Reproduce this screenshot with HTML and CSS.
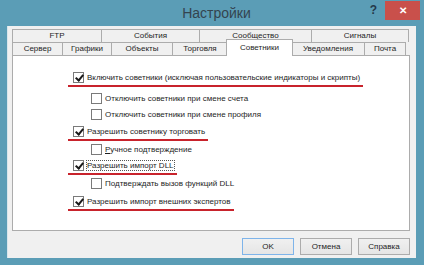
FILE: index.html
```html
<!DOCTYPE html>
<html lang="ru">
<head>
  <meta charset="UTF-8"/>
  <title>Настройки</title>
  <link rel="stylesheet" href="styles.css">
</head>
<body>
  <div class="window">
    <div class="titlebar">
      <span class="title">Настройки</span>
      <span class="help">?</span>
      <span class="close">&#x2715;</span>
    </div>
    <div class="client">
      <div class="tabrow">
        <div class="tab" style="width:90px">FTP</div>
        <div class="tab" style="width:99px">События</div>
        <div class="tab" style="width:113px">Сообщество</div>
        <div class="tab" style="width:98px">Сигналы</div>
      </div>
      <div class="tabrow row2">
        <div class="tab" style="width:51px">Сервер</div>
        <div class="tab" style="width:50px">Графики</div>
        <div class="tab" style="width:62px">Объекты</div>
        <div class="tab" style="width:56px">Торговля</div>
        <div class="tab active" style="width:65px">Советники</div>
        <div class="tab" style="width:74px">Уведомления</div>
        <div class="tab" style="width:42px">Почта</div>
      </div>
      <div class="panel">
        <div class="row top mark r1"><span class="cb on"></span>Включить советники (исключая пользовательские индикаторы и скрипты)</div>
        <div class="row sub"><span class="cb"></span>Отключить советники при смене счета</div>
        <div class="row sub r3"><span class="cb"></span>Отключить советники при смене профиля</div>
        <div class="row top mark"><span class="cb on"></span>Разрешить советнику торговать</div>
        <div class="row sub"><span class="cb"></span><span><u>Р</u>учное подтверждение</span></div>
        <div class="row top mark"><span class="cb on"></span><span class="focus">Разрешить импорт DLL</span></div>
        <div class="row sub r7"><span class="cb"></span>Подтверждать вызов функций DLL</div>
        <div class="row top mark"><span class="cb on"></span>Разрешить импорт внешних экспертов</div>
      </div>
      <div class="buttons">
        <button class="btn">OK</button>
        <button class="btn">Отмена</button>
        <button class="btn">Справка</button>
      </div>
    </div>
  </div>
</body>
</html>
```

FILE: styles.css
```css
html, body { margin: 0; padding: 0; }
body { width: 424px; height: 265px; overflow: hidden; font-family: "Liberation Sans", Arial, sans-serif; font-size: 8px; color: #1e1e1e; }
.window { width: 424px; height: 265px; background: #5b9db6; box-sizing: border-box; padding: 0 8px 0 7px; }
.titlebar { height: 26px; display: flex; align-items: center; position: relative; }
.title { flex: 1; text-align: center; font-size: 14px; color: #34444f; padding-left: 10px; }
.help { position: absolute; right: 39px; top: 3px; font-weight: bold; font-size: 12px; color: #24384a; }
.close { position: absolute; right: -4px; top: 1px; width: 35px; height: 19px; background: #c9504b; color: #fff; font-size: 10px; font-weight: bold; text-align: center; line-height: 19px; }
.client { background: #f0f0f0; height: 232px; box-sizing: border-box; padding: 3px 6px 0 4px; border-left: 1px solid #d8e6ec; }
.tabrow { display: flex; height: 13px; margin-top: 0; }
.row2 { position: relative; z-index: 1; }
.tab { box-sizing: border-box; height: 13px; border: 1px solid #acacac; border-bottom: none; margin-right: -1px; background: #f0f0f0; text-align: center; line-height: 12px; white-space: nowrap; }
.tab.active { background: #fff; height: 17px; margin-top: -3px; margin-left: -1px; margin-right: -2px; width: 67px !important; position: relative; z-index: 2; line-height: 15px; }
.panel { background: #fff; border: 1px solid #acacac; height: 176px; box-sizing: border-box; padding-top: 13px; display: flex; flex-direction: column; }
.row { height: 16px; display: flex; align-items: center; white-space: nowrap; }
.row.top { padding-left: 60px; }
.row.sub { padding-left: 78px; }
.mark { align-self: flex-start; border-bottom: 2px solid #c8232c; margin-left: 55px; padding-left: 5px !important; padding-right: 3px; }
.r1 { margin-bottom: 3px; }
.r3 { margin-bottom: 1px; }
.r7 { margin-bottom: 2px; }
.cb { width: 9px; height: 9px; border: 1px solid #7a7a7a; background: #fff; margin-right: 3px; flex: none; position: relative; }
.cb.on::after { content: ""; position: absolute; left: 3px; top: 0px; width: 3px; height: 6px; border: solid #1a1a1a; border-width: 0 2px 2px 0; transform: rotate(40deg); }
.focus { outline: 1px dotted #555; outline-offset: 0; }
.buttons { display: flex; justify-content: flex-end; gap: 6px; padding-top: 7px; padding-right: 0; }
.btn { width: 52px; height: 17px; border: 1px solid #acacac; background: linear-gradient(#f0f0f0, #e5e5e5); font-family: inherit; font-size: 8px; color: #1e1e1e; padding: 0; }
.btn:first-child { border-color: #7eb4ea; }
```
